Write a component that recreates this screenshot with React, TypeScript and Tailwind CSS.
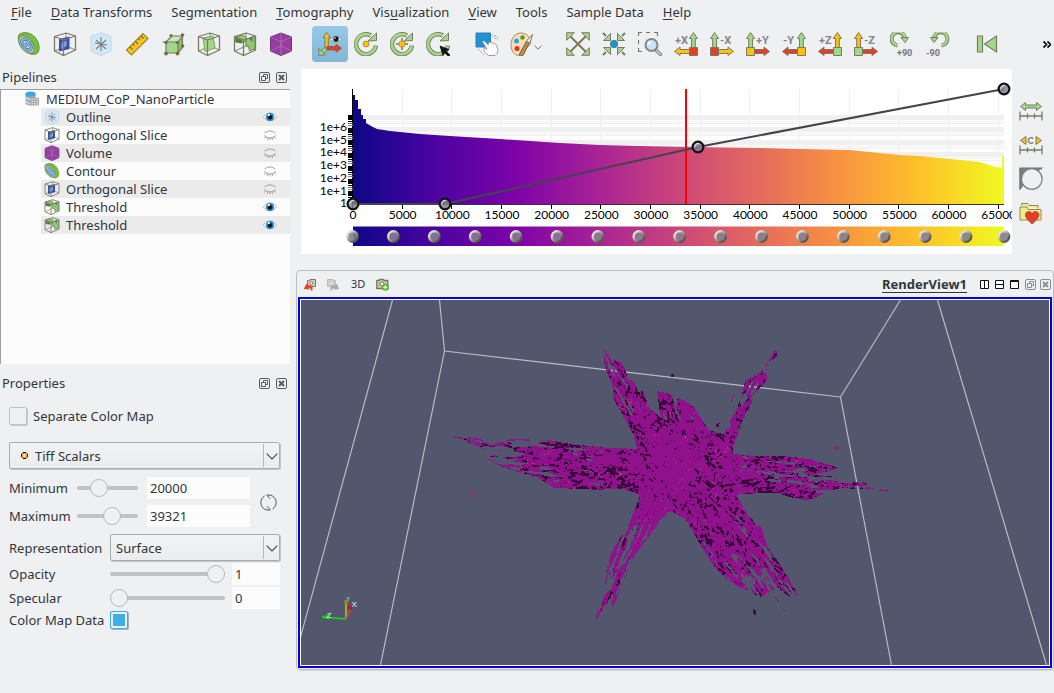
import React from "react";

/* ---------- toolbar drawings ---------- */

const OLIVE = "#7b7a63";
const GREEN = "#a3d88a";
const RED = "#e33e28";
const YELLOW = "#fcc010";

type IconProps = { className?: string };

function Svg({ className = "size-6", children }: { className?: string; children: React.ReactNode }) {
  return (
    <svg viewBox="0 0 24 24" className={`${className} shrink-0`} fill="none" aria-hidden="true">
      {children}
    </svg>
  );
}

function CubeWire({ children }: { children?: React.ReactNode }) {
  return (
    <>
      <path d="M13 1v13M2 19l11-5 9.500 4" stroke="#9a998a" strokeWidth="1.200" />
      {children}
      <path d="M1.500 4.500 13 1l9.500 3v14l-12 5.500-9-4.500zM1.500 4.500l9 3.500 12-4M10.500 8v15.500" stroke={OLIVE} strokeWidth="1.300" strokeLinejoin="round" />
    </>
  );
}

const ContourIcon = ({ className }: IconProps) => (
  <Svg className={className}>
    <path d="M2 2.500C6-.5 14 0 18.500 6c4.500 6 4.500 13 1.500 15.500C15 24 8 20.500 4.500 15.500 1.500 11 .5 5 2 2.500z" fill="#72c03e" stroke="#5d8b35" strokeWidth="1" />
    <g transform="rotate(52 9.500 12.500)">
      <ellipse cx="9.500" cy="12.500" rx="10" ry="6" fill="#bddcc0" stroke="#6e7b58" strokeWidth=".9" />
      <ellipse cx="9.500" cy="12.500" rx="7.600" ry="4.500" fill="#8dbfe4" stroke="#46698e" strokeWidth=".8" />
      <ellipse cx="9.500" cy="12.500" rx="4.800" ry="2.900" fill="#b3daf1" stroke="#46698e" strokeWidth=".8" />
      <ellipse cx="9.500" cy="12.500" rx="2" ry="1.200" fill="#8abbe2" stroke="#46698e" strokeWidth=".7" />
    </g>
  </Svg>
);
const SliceIcon = ({ className }: IconProps) => (
  <Svg className={className}>
    <CubeWire>
      <path d="M6 7 16.500 4.500v12.500L6 19.500z" fill="#3452a8" />
      <path d="M8.500 11 13.500 8.500v5.500l-5 3z" fill="#8e9fd6" />
    </CubeWire>
  </Svg>
);
const OutlineIcon = ({ className }: IconProps) => (
  <Svg className={className}>
    <path d="M2 4.500 12 1l10 3.500V19l-10 4.500L2 19z" fill="#d2e7f7" stroke="#c3d5e2" strokeWidth="1" />
    <path d="M12 5v14M6 11l12 2M7 17l10-9M7 8l10 9" stroke="#777d80" strokeWidth="1.100" />
  </Svg>
);
const RulerIcon = () => (
  <Svg>
    <path d="M1.500 18 18 1.500 23 6.500 6.500 23z" fill="#fbc412" stroke="#9a8641" strokeWidth="1.200" />
    <path d="m5 15 2.500 2.500M8 12l1.500 1.500M10.500 9.500 13 12M13.500 6.500 15 8M16 4l2.500 2.500" stroke="#76632b" strokeWidth="1.200" />
  </Svg>
);
const CropIcon = () => (
  <Svg>
    <path d="m4 10 6-6.500h11.500L17 10z" fill="#c8e9b6" />
    <path d="M5 10h12v11H5z" fill={GREEN} />
    <path d="m17 10 4.500-6v11L17 21z" fill="#84c46b" />
    <path d="M5 10h12v11H5zM5 10l6-6h10.500L17 10M21.500 4v11.500L17 21M1.500 10H5" stroke={OLIVE} strokeWidth="1.200" />
    <g fill="#7a6a4c">
      <circle cx="5" cy="10.500" r="1.700" /><circle cx="16.500" cy="10.500" r="1.700" /><circle cx="5" cy="21.500" r="1.900" /><circle cx="16.500" cy="21.500" r="1.900" />
      <circle cx="10" cy="3.500" r="1.600" /><circle cx="21.500" cy="3" r="1.800" /><circle cx="21.500" cy="14" r="1.800" />
    </g>
  </Svg>
);
const ClipIcon = () => (
  <Svg>
    <CubeWire>
      <path d="m6 6 10-2 2 12-10 3.500z" fill={GREEN} stroke="#7ba565" strokeWidth="1" />
    </CubeWire>
  </Svg>
);
const ThresholdIcon = ({ className }: IconProps) => (
  <Svg className={className}>
    <CubeWire>
      <path d="M2.500 5 10 3l3 2v4l-5 2-5.500-1zM13 7.500 22 4v12.500L16.500 19l-1-5-2.500-1z" fill="#8dc873" stroke="#6e9158" strokeWidth="1" />
      <path d="m3 6 6 2v3l-6-1zM16 6.500l3.500-1.500v5z" fill="#4f8045" />
    </CubeWire>
  </Svg>
);
const VolumeIcon = ({ className }: IconProps) => (
  <Svg className={className}>
    <path d="M1.500 5 12 1l10.500 4v14L12 23.500 1.500 19z" fill="#943f9e" stroke="#783285" strokeWidth="1" strokeLinejoin="round" />
    <path d="M1.500 5 12 9.500 22.500 5M12 9.500v14M12 1v13M1.500 19 12 14l10.500 5" stroke="#b170b9" strokeWidth=".8" />
  </Svg>
);
const AxesIcon = () => (
  <Svg>
    <path d="M9 15.500 3.500 21" stroke={OLIVE} strokeWidth="4" />
    <path d="M9 15.500 4 20.500" stroke={GREEN} strokeWidth="2.500" />
    <path d="M.8 23.300V16.500l6.500 6.500z" fill={GREEN} stroke={OLIVE} strokeWidth="1" />
    <path d="M7 16V5.500H5L8.700.5l3.600 5h-2V16z" fill={YELLOW} stroke={OLIVE} strokeWidth="1" />
    <path d="M9 14.500h9v-2.300l5.500 4-5.500 4V18H9z" fill={RED} stroke="#8f5c4c" strokeWidth="1" />
    <path d="M12.500 7.500Q18 1.500 23.500 7.500 18 12.500 12.500 7.500z" fill="#fff" stroke="#8a969c" strokeWidth="1" />
    <circle cx="18" cy="7" r="2.700" fill="#161616" />
    <circle cx="17" cy="6" r=".8" fill="#fff" />
  </Svg>
);
function RotateArc() {
  return (
    <>
      <path d="M22 13.500A10 10 0 1 1 17 3.500" stroke={OLIVE} strokeWidth="4.400" />
      <path d="M21.800 14A10 10 0 1 1 17 3.500" stroke={GREEN} strokeWidth="2.700" />
      <path d="m14 9 8.500-.5V1z" fill={GREEN} stroke={OLIVE} strokeWidth="1" strokeLinejoin="round" />
    </>
  );
}
const RotateDotIcon = () => (
  <Svg>
    <RotateArc />
    <circle cx="12" cy="12" r="3" fill={YELLOW} stroke="#9a8641" strokeWidth=".8" />
  </Svg>
);
const RotateCrossIcon = () => (
  <Svg>
    <RotateArc />
    <path d="M12 6v12M6 12h12" stroke="#77765f" strokeWidth="1.500" />
    <circle cx="12" cy="12" r="3.200" fill={YELLOW} stroke="#9a8641" strokeWidth=".8" />
  </Svg>
);
const RotatePickIcon = () => (
  <Svg>
    <RotateArc />
    <path d="m14 14 9 3.500-3 1.500 4 4-1.500 1.500-4-4-1.500 3z" fill="#151515" stroke="#151515" strokeWidth=".8" />
  </Svg>
);
const HandIcon = () => (
  <Svg>
    <path d="M1 1h14.500v14H1z" fill="#1f93d6" stroke="#2b7fb4" />
    <path d="M17 3l5 5M3 17l6 6M20 3l3 4" stroke="#8e9397" strokeDasharray="2 1.500" />
    <path d="M7.500 9.500c.8-.9 2-.5 2.700.3l3 3.200.3-2.200c1-1 2-.6 2.500.2.900-.6 2-.3 2.500.6 1-.4 2 0 2.500 1.200 1.200 2.500 2.500 4.500 1.500 8L20 23.500h-6.500C11 22 9.500 19 8.500 17.500c.5-1.500 2-1 3.500-.2z" fill="#fff" stroke="#9b9b9b" strokeWidth="1" />
  </Svg>
);
const PaletteIcon = () => (
  <Svg>
    <path d="M11 1C5 1 1 6.500 1 12.500 1 19 4.500 23.500 9 23.500c3.500 0 3-3.500 4.500-6 2-2.500 6-2 7-6C21.500 6 17 1 11 1z" fill="#f9dfb0" stroke="#a58c62" strokeWidth="1" />
    <circle cx="6.500" cy="9" r="2.500" fill="#2ea2de" />
    <circle cx="12.500" cy="5.500" r="2.200" fill="#5f9438" />
    <circle cx="7" cy="16.500" r="2.500" fill="#e33025" />
    <path d="m9.500 22 7-12.500 2.500 2L13 23.500c-1.500 1-3.500.5-3.500-1.500z" fill="#b99252" stroke="#6c5b3b" />
    <path d="M16 9.500 22.500 2.500 20 11z" fill="#f2f2f2" stroke="#77765f" />
  </Svg>
);
const ExpandIcon = () => (
  <Svg>
    <path d="m4 4 16 16M20 4 4 20" stroke={OLIVE} strokeWidth="2" />
    <path d="M.7.700h7.600L.7 8.300zM23.300.700v7.600L15.700.700zM.7 23.300v-7.600l7.600 7.600zM23.300 23.300h-7.600l7.600-7.600z" fill={GREEN} stroke={OLIVE} strokeWidth="1" strokeLinejoin="round" />
  </Svg>
);
const CenterIcon = () => (
  <Svg>
    <path d="M1 1l3 3M23 1l-3 3M1 23l3-3M23 23l-3-3" stroke={OLIVE} strokeWidth="2" />
    <path d="M8.500 1.500v7h-7zM15.500 1.500v7h7zM8.500 22.500v-7h-7zM15.500 22.500v-7h7z" fill={GREEN} stroke={OLIVE} strokeWidth="1" strokeLinejoin="round" />
    <circle cx="12" cy="12" r="3.700" fill="#1f93d6" stroke="#4f8199" />
  </Svg>
);
const ZoomBoxIcon = () => (
  <Svg>
    <path d="M.5 4V.5H4M8 .5h4M16 .5h3.500V4M.5 8v4M.5 16v3.500H4" stroke="#77775f" strokeWidth="1.200" />
    <path d="m18 18 5 5" stroke="#8a8a8a" strokeWidth="3.500" strokeLinecap="round" />
    <path d="m18.500 18.500 4 4" stroke="#c9ccd0" strokeWidth="1.500" strokeLinecap="round" />
    <circle cx="13.500" cy="13" r="6" fill="#c4e5f8" stroke="#858789" strokeWidth="2" />
    <circle cx="11.500" cy="11" r="2" fill="#edf8fe" />
  </Svg>
);

function ViewAxisIcon({ up, box, side, label, flip = false }: { up: string; box: string; side: string; label: string; flip?: boolean }) {
  return (
    <Svg>
      <g transform={flip ? "translate(24 0) scale(-1 1)" : undefined} stroke={OLIVE} strokeWidth="1">
        <path d="M17.500 16V6.500h-2.200L19.500.5l4 6h-2.200V16z" fill={up} />
        <path d="M15.500 17.500H6V15L.5 19.500 6 23.500V21.500h9.500z" fill={side} />
        <path d="M15.500 15.500h8v8h-8z" fill={box} />
      </g>
      <text x={flip ? 10 : 1} y="12" fontSize="11" fontWeight="700" fill="#85858a" fontFamily="Roboto, sans-serif">
        {label}
      </text>
    </Svg>
  );
}
function Turn90Icon({ label, flip = false }: { label: string; flip?: boolean }) {
  return (
    <Svg>
      <g transform={flip ? "translate(24 0) scale(-1 1)" : "translate(-1 0)"}>
        <path d="M8.500 13.500A6.700 6.700 0 1 1 16 7" stroke={OLIVE} strokeWidth="4" />
        <path d="M9 13.200A6.700 6.700 0 1 1 16 7" stroke={GREEN} strokeWidth="2.400" />
        <path d="M12 5.500h7.500l-3.500 5z" fill={GREEN} stroke={OLIVE} strokeWidth="1" />
      </g>
      <text x={flip ? 0 : 7} y="23.500" fontSize="9" fontWeight="700" fill="#75757a" fontFamily="Roboto, sans-serif">
        {label}
      </text>
    </Svg>
  );
}
const FirstFrameIcon = () => (
  <Svg>
    <path d="M2.500 4h5v16h-5zM21.500 4v16L9.500 12z" fill={GREEN} stroke={OLIVE} strokeWidth="1.200" />
  </Svg>
);

/* ---------- histogram side drawings ---------- */

const Scale = () => <path d="M1 12.500v9M23 12.500v9M1 17h22M8.500 14.500v5M15.500 14.500v5" stroke={OLIVE} strokeWidth="1.300" />;
const ResetRangeIcon = () => (
  <Svg>
    <Scale />
    <path d="m1.500 7.500 5-4V6h11V3.500l5 4-5 4V9h-11v2.500z" fill={GREEN} stroke={OLIVE} />
  </Svg>
);
const CustomRangeIcon = () => (
  <Svg>
    <Scale />
    <path d="M1.500 7.500 7 3.500v8zM22.500 7.500 17 3.500v8z" fill={YELLOW} stroke={OLIVE} />
    <path d="M14.200 5.600a2.800 2.800 0 1 0 0 3.800" stroke="#85858a" strokeWidth="1.600" />
  </Svg>
);
const InvertIcon = () => (
  <Svg>
    <path d="M.8 1h22.500L19 3.500 4 18.500.8 22.500z" fill="#7d7f81" stroke="#6e7072" />
    <circle cx="12.800" cy="12" r="10.300" fill="#eff0f1" stroke="#7d7f81" strokeWidth="1.200" />
  </Svg>
);
const PresetIcon = () => (
  <Svg>
    <path d="M2.500 4.500v-2h6l1.500 2h9v3" fill="#f3ea8c" stroke="#8f8a55" />
    <path d="M1 6h7l1.500 2.500H22V19H1z" fill="#f3ea8c" stroke="#8f8a55" strokeLinejoin="round" />
    <path d="M13 23C9 19.500 6.500 17 6.500 13.800c0-3.600 4.800-4.300 6.500-1.300 1.700-3 7-2.300 7 1.300 0 3.200-3 5.700-7 9.200z" fill={RED} stroke="#9c4a35" strokeWidth=".8" />
  </Svg>
);

/* ---------- small drawings ---------- */

const Eye = ({ open }: { open: boolean }) => (
  <svg viewBox="0 0 14 14" className="size-3.5" fill="none" aria-hidden="true">
    {open ? (
      <>
        <path d="M.3 7Q7-1.500 13.700 7 7 15 .3 7z" fill="#fff" stroke="#8f8f8f" strokeWidth=".7" />
        <circle cx="7" cy="7" r="4" fill="#188ad0" />
        <circle cx="7" cy="7.200" r="2.200" fill="#0b0b0b" />
        <circle cx="5.800" cy="5" r="1.200" fill="#e7f6ff" />
      </>
    ) : (
      <path d="M1.500 5Q7 .8 12.500 5M1.200 7.500Q7 12.500 12.800 7.500M2.500 9l-1 1.500M5 10l-.7 2M7 10.300v2M9 10l.7 2M11.500 9l1 1.500" stroke="#979797" strokeWidth=".9" />
    )}
  </svg>
);
const DatasetIcon = () => (
  <svg viewBox="0 0 16 16" className="size-4" fill="none" aria-hidden="true">
    <path d="M1.500 4v9q5 3 10 0V4z" fill="#a5adb1" />
    <ellipse cx="6.500" cy="3.200" rx="5.300" ry="2.600" fill="#39a9dc" />
    <path d="M1.500 7q5 3 10 0M1.500 10.500q5 3 6 1.500" stroke="#e9edef" />
    <path d="M7 7h7.500v7H7zM7 9.300h7.500M7 11.700h7.500M9.500 7v7M12 7v7" fill="#e4e2dc" stroke="#9c9a90" strokeWidth=".8" />
  </svg>
);
const FloatIcon = ({ faint = false }: { faint?: boolean }) => (
  <svg viewBox="0 0 11 11" className="size-[11px]" fill="none" stroke={faint ? "#8e8e8e" : "#5b5b5b"} aria-hidden="true">
    <rect x=".5" y=".5" width="10" height="10" rx="1.500" />
    <path d="M2.500 4.500h4v4h-4zM4.500 4.500v-2h4v4h-2" />
  </svg>
);
const CloseIcon = ({ faint = false }: { faint?: boolean }) => (
  <svg viewBox="0 0 11 11" className="size-[11px]" fill="none" stroke={faint ? "#8e8e8e" : "#5b5b5b"} aria-hidden="true">
    <rect x=".5" y=".5" width="10" height="10" rx="1.500" />
    <path d="m3 3 5 5M8 3 3 8" strokeWidth="2" />
  </svg>
);
const Chevron = ({ className = "" }: IconProps) => (
  <svg viewBox="0 0 12 7" className={className} fill="none" stroke="#3f4549" strokeWidth="1.100" aria-hidden="true">
    <path d="m.7.700 5.300 5.300 5.300-5.300" />
  </svg>
);
const CameraIcon = ({ tone, badge, flip = false }: { tone: string; badge: string; flip?: boolean }) => (
  <svg viewBox="0 0 13 13" className="size-[13px]" fill="none" aria-hidden="true">
    <g transform={flip ? "translate(13 0) scale(-1 1)" : undefined}>
      <path d="M4.500 2.500h2l.5-1h5.500v7h-8z" fill="#d3d0c2" stroke={tone} />
      <circle cx="8.500" cy="5" r="1.600" fill="#fff" stroke={tone} />
      <path d="M9.500 12.500V9Q8 6.500 4.500 7L3.500 5.500.7 11l6 .5L5.500 9.500Q7.500 9 8 12.500z" fill={badge} />
    </g>
  </svg>
);
const CaptureIcon = () => (
  <svg viewBox="0 0 13 13" className="size-[13px]" fill="none" aria-hidden="true">
    <path d="M.8 2.500h2l1-1h3.500l1 1h3.500v8h-11z" fill="#c9c6b8" stroke="#77765f" strokeWidth="1.300" />
    <circle cx="6" cy="6" r="2" fill="#fff" stroke="#77765f" />
    <circle cx="9.300" cy="9.300" r="3.500" fill="#5cb82c" />
    <path d="M9.300 7.300v4M7.300 9.300h4" stroke="#e6ffdb" strokeWidth="1.200" />
  </svg>
);
const LayoutIcon = ({ d }: { d: string }) => (
  <svg viewBox="0 0 9 9" className="size-[9px]" fill="#fff" stroke="#111" aria-hidden="true">
    <path d="M.5.5h8v8h-8z" />
    <path d={d} />
  </svg>
);

/* ---------- menu ---------- */

const MENUS: [string, string, string][] = [
  ["", "F", "ile"],
  ["", "D", "ata Transforms"],
  ["Se", "", "gmentation"],
  ["", "T", "omography"],
  ["Vis", "u", "alization"],
  ["", "V", "iew"],
  ["Tools", "", ""],
  ["Sample Data", "", ""],
  ["", "H", "elp"],
];

function ToolButton({ label, active = false, children }: { label: string; active?: boolean; children: React.ReactNode }) {
  return (
    <button
      type="button"
      aria-label={label}
      className={`flex size-9 shrink-0 items-center justify-center rounded-sm ${active ? "bg-linear-to-b from-[#93cae8] to-[#84b5d5]" : ""}`}
    >
      {children}
    </button>
  );
}

function Toolbar() {
  return (
    <div className="flex h-10 items-center overflow-hidden pl-[11px]">
      <div className="flex shrink-0 gap-[13px]">
        <div className="flex">
          <ToolButton label="Contour"><ContourIcon /></ToolButton>
          <ToolButton label="Orthogonal slice"><SliceIcon /></ToolButton>
          <ToolButton label="Outline"><OutlineIcon /></ToolButton>
          <ToolButton label="Ruler"><RulerIcon /></ToolButton>
          <ToolButton label="Crop"><CropIcon /></ToolButton>
          <ToolButton label="Clip"><ClipIcon /></ToolButton>
          <ToolButton label="Threshold"><ThresholdIcon /></ToolButton>
          <ToolButton label="Volume"><VolumeIcon /></ToolButton>
        </div>
        <div className="flex">
          <ToolButton label="Show orientation axes" active><AxesIcon /></ToolButton>
          <ToolButton label="Show center"><RotateDotIcon /></ToolButton>
          <ToolButton label="Reset center"><RotateCrossIcon /></ToolButton>
          <ToolButton label="Pick center"><RotatePickIcon /></ToolButton>
        </div>
        <div className="flex">
          <ToolButton label="Interact"><HandIcon /></ToolButton>
          <button type="button" aria-label="Color palette" className="flex h-9 w-[42px] items-center justify-center">
            <PaletteIcon />
            <Chevron className="mt-1.5 h-[5px] w-2" />
          </button>
        </div>
        <div className="flex">
          <ToolButton label="Reset camera"><ExpandIcon /></ToolButton>
          <ToolButton label="Zoom to data"><CenterIcon /></ToolButton>
          <ToolButton label="Zoom to box"><ZoomBoxIcon /></ToolButton>
          <ToolButton label="View +X"><ViewAxisIcon up={GREEN} box={RED} side={YELLOW} label="+X" /></ToolButton>
          <ToolButton label="View -X"><ViewAxisIcon up={GREEN} box={RED} side={YELLOW} label="-X" flip /></ToolButton>
          <ToolButton label="View +Y"><ViewAxisIcon up={GREEN} box={YELLOW} side={RED} label="+Y" flip /></ToolButton>
          <ToolButton label="View -Y"><ViewAxisIcon up={GREEN} box={YELLOW} side={RED} label="-Y" /></ToolButton>
          <ToolButton label="View +Z"><ViewAxisIcon up={YELLOW} box={GREEN} side={RED} label="+Z" /></ToolButton>
          <ToolButton label="View -Z"><ViewAxisIcon up={YELLOW} box={GREEN} side={RED} label="-Z" flip /></ToolButton>
          <ToolButton label="Rotate +90"><Turn90Icon label="+90" /></ToolButton>
          <ToolButton label="Rotate -90"><Turn90Icon label="-90" flip /></ToolButton>
        </div>
        <ToolButton label="First frame"><FirstFrameIcon /></ToolButton>
      </div>
      <button type="button" aria-label="More tools" className="ml-auto pr-[3px]">
        <svg viewBox="0 0 8 7" className="h-[7px] w-2" fill="none" stroke="#000" strokeWidth="1.700" aria-hidden="true">
          <path d="m.5.5 3 3-3 3M4.500.5l3 3-3 3" />
        </svg>
      </button>
    </div>
  );
}

/* ---------- left column ---------- */

const PIPELINE: { name: string; Icon: React.ComponentType<IconProps>; open: boolean }[] = [
  { name: "Outline", Icon: OutlineIcon, open: true },
  { name: "Orthogonal Slice", Icon: SliceIcon, open: false },
  { name: "Volume", Icon: VolumeIcon, open: false },
  { name: "Contour", Icon: ContourIcon, open: false },
  { name: "Orthogonal Slice", Icon: SliceIcon, open: false },
  { name: "Threshold", Icon: ThresholdIcon, open: true },
  { name: "Threshold", Icon: ThresholdIcon, open: true },
];

function PanelTitle({ title }: { title: string }) {
  return (
    <div className="mb-px flex h-[22px] items-center pr-[3px] pl-0.5">
      <h2 className="flex-1">{title}</h2>
      <div className="flex gap-1.5">
        <button type="button" aria-label={`Float ${title}`}><FloatIcon /></button>
        <button type="button" aria-label={`Close ${title}`}><CloseIcon /></button>
      </div>
    </div>
  );
}

function PipelineTree() {
  return (
    <div className="h-[275px] border-t border-l border-[#9b9ea1] bg-[#fcfcfc]">
      <div className="flex h-[18px] items-center gap-1.5 pl-[23px]">
        <DatasetIcon />
        <span>MEDIUM_CoP_NanoParticle</span>
      </div>
      <ul className="pl-10">
        {PIPELINE.map(({ name, Icon, open }, i) => (
          <li key={i} className="flex h-[18px] items-center pr-[13px] pl-[3px] odd:bg-[#ebebeb]">
            <Icon className="size-4" />
            <span className="flex-1 pl-1.5">{name}</span>
            <button type="button" aria-label={`${open ? "Hide" : "Show"} ${name}`}>
              <Eye open={open} />
            </button>
          </li>
        ))}
      </ul>
    </div>
  );
}

const RANGE =
  "h-[18px] appearance-none bg-transparent [&::-webkit-slider-runnable-track]:h-1 [&::-webkit-slider-runnable-track]:rounded-full [&::-webkit-slider-runnable-track]:bg-[#bdc3c7] [&::-webkit-slider-thumb]:-mt-[7px] [&::-webkit-slider-thumb]:size-[18px] [&::-webkit-slider-thumb]:appearance-none [&::-webkit-slider-thumb]:rounded-full [&::-webkit-slider-thumb]:border [&::-webkit-slider-thumb]:border-[#b5babd] [&::-webkit-slider-thumb]:bg-[#eff0f1]";
const FIELD = "h-[22px] bg-[#fcfcfc] pl-[3px]";
const CHECK =
  "size-[18px] shrink-0 appearance-none rounded-xs border border-[#bdc3c7] bg-[#eff0f1] shadow-[1px_1px_0_#c4c9cc] checked:border-[#3daee9] checked:bg-[#3daee9] checked:shadow-[inset_0_0_0_2px_#eff0f1,1px_1px_0_#9fb4c0]";

function Combo({ id, label, options, icon = false }: { id: string; label: string; options: string[]; icon?: boolean }) {
  return (
    <div className="relative flex-1">
      <select
        id={id}
        aria-label={label}
        className={`h-[27px] w-full appearance-none rounded-xs border border-[#a9adb0] bg-linear-to-b from-[#f1f2f3] to-[#ebeced] pr-5 shadow-[1px_1px_0_#c0c4c7] ${icon ? "pl-[25px]" : "pl-[5px]"}`}
      >
        {options.map((o) => (
          <option key={o}>{o}</option>
        ))}
      </select>
      {icon && (
        <svg viewBox="0 0 7 7" className="pointer-events-none absolute top-2.5 left-3 size-[7px]" aria-hidden="true">
          <path d="M2 .5h3L6.500 2v3L5 6.500H2L.5 5V2z" fill="#f9a43b" stroke="#5a3a10" strokeWidth=".8" />
          <path d="M2 .5h3M.5 2.500v2M6.500 2.500v2M2 6.500h3" stroke="#000" strokeWidth="1" />
          <circle cx="3.500" cy="3.500" r="1.200" fill="#fff2dc" />
        </svg>
      )}
      <span className="pointer-events-none absolute inset-y-0.5 right-4 w-px bg-[#b4b8ba]" />
      <Chevron className="pointer-events-none absolute top-[11px] right-0.5 h-[7px] w-3" />
    </div>
  );
}

function Properties() {
  return (
    <form className="flex flex-col pr-[10px] pl-[9px]">
      <label className="mt-3 flex items-center gap-1.5">
        <input type="checkbox" className={CHECK} />
        Separate Color Map
      </label>
      <div className="mt-[17px] flex">
        <Combo id="scalars" label="Scalars" options={["Tiff Scalars"]} icon />
      </div>
      <div className="mt-2 flex items-center">
        <div className="grid flex-1 grid-cols-[auto_61px_103px] items-center justify-start gap-y-1.5">
          <label htmlFor="min" className="w-[68px]">Minimum</label>
          <input type="range" aria-label="Minimum slider" defaultValue={30} className={`${RANGE} w-[61px]`} />
          <input id="min" type="text" defaultValue="20000" className={`${FIELD} ml-[9px] w-[103px]`} />
          <label htmlFor="max" className="w-[68px]">Maximum</label>
          <input type="range" aria-label="Maximum slider" defaultValue={60} className={`${RANGE} w-[61px]`} />
          <input id="max" type="text" defaultValue="39321" className={`${FIELD} ml-[9px] w-[103px]`} />
        </div>
        <button type="button" aria-label="Reset range" className="mr-[3px]">
          <svg viewBox="0 0 17 17" className="size-[17px]" fill="none" stroke="#4d5357" aria-hidden="true">
            <path d="M4.500 2A7.600 7.600 0 0 0 4.500 15M12.500 15A7.600 7.600 0 0 0 12.500 2M7 1Q10 .5 12.500 2M10 16Q7 16.500 4.500 15M6.500 .8l3.500 4M10.500 16.200l-3.500-4" />
          </svg>
        </button>
      </div>
      <div className="mt-[7px] flex items-center">
        <label htmlFor="rep" className="w-[101px]">Representation</label>
        <Combo id="rep" label="Representation" options={["Surface"]} />
      </div>
      <div className="mt-0.5 flex items-center">
        <label htmlFor="opacity" className="w-[101px]">Opacity</label>
        <input type="range" aria-label="Opacity slider" defaultValue={100} className={`${RANGE} min-w-0 flex-1`} />
        <input id="opacity" type="text" defaultValue="1" className={`${FIELD} ml-[7px] w-12`} />
      </div>
      <div className="mt-0.5 flex items-center">
        <label htmlFor="specular" className="w-[101px]">Specular</label>
        <input type="range" aria-label="Specular slider" defaultValue={0} className={`${RANGE} min-w-0 flex-1`} />
        <input id="specular" type="text" defaultValue="0" className={`${FIELD} ml-[7px] w-12`} />
      </div>
      <div className="mt-0.5 flex items-center">
        <label htmlFor="mapdata" className="w-[101px]">Color Map Data</label>
        <input id="mapdata" type="checkbox" defaultChecked className={CHECK} />
      </div>
    </form>
  );
}

/* ---------- histogram ---------- */

const PLASMA = ["#0d0887", "#4b03a1", "#7d03a8", "#a82296", "#cb4679", "#e56b5d", "#f89441", "#fdc328", "#f0f921"];
const X0 = 52;
const X1 = 703;
const BASE = 135;
const CURVE: [number, number][] = [
  [52, 26], [54, 26], [54, 31], [57, 31], [57, 40], [60, 40], [60, 46], [62, 46], [62, 50], [65, 50], [65, 54], [70, 57], [76, 60],
  [89, 62], [119, 65], [149, 67], [199, 70], [259, 74], [299, 76], [339, 77], [389, 78], [459, 79], [499, 80], [549, 81],
  [579, 84], [599, 86], [619, 87], [649, 90], [679, 93], [695, 98], [701, 99], [701, 87], [703, 87],
];
const X_TICKS = Array.from({ length: 14 }, (_, i) => i * 5000);
const Y_LABELS = ["1e+6", "1e+5", "1e+4", "1e+3", "1e+2", "1e+1", "1"];
const xOf = (v: number) => X0 + (v / 65535) * (X1 - X0);

function Histogram() {
  const curve = `M${X0} ${BASE}` + CURVE.map(([x, y]) => `L${x} ${y}`).join("") + `L${X1} ${BASE}z`;
  return (
    <svg viewBox="0 0 711 185" preserveAspectRatio="xMinYMin meet" className="h-[185px] min-w-0 flex-1 bg-white" role="img" aria-label="Histogram">
      <defs>
        <linearGradient id="plasma" gradientUnits="userSpaceOnUse" x1={X0} x2={X1} y1="0" y2="0">
          {PLASMA.map((c, i) => (
            <stop key={c} offset={i / 8} stopColor={c} />
          ))}
        </linearGradient>
        <linearGradient id="knob" x1="0" y1="0" x2="1" y2="1">
          <stop offset=".2" stopColor="#e0e0d0" />
          <stop offset=".8" stopColor="#5a5a4c" />
        </linearGradient>
      </defs>
      <g shapeRendering="crispEdges">
        {[46, 58, 71, 83].map((y) => (
          <g key={y} fill="#f0f0f0">
            <rect x={X0} y={y} width={X1 - X0} height="5" />
            <rect x={X0} y={y + 6} width={X1 - X0} height="1" />
            <rect x={X0} y={y + 8} width={X1 - X0} height="1" />
          </g>
        ))}
        {X_TICKS.slice(1).map((v) => (
          <rect key={v} x={Math.round(xOf(v)) - 1} y="20" width="1" height="115" fill="#f0f0f0" />
        ))}
      </g>
      <path d={curve} fill="url(#plasma)" />
      <g shapeRendering="crispEdges" fill="#000">
        <rect x="51" y="20" width="1" height="116" />
        <rect x={X0} y="135" width={X1 - X0} height="1" fill="#33333a" />
        {[46, 59, 71, 84, 97, 110, 122].map((y) => (
          <g key={y}>
            <rect x="47" y={y} width="5" height="5" />
            <rect x="47" y={y + 6} width="5" height="1" />
            <rect x="47" y={y + 8} width="5" height="1" fill="#666" />
            <rect x="47" y={y + 10} width="5" height="1" fill="#888" />
          </g>
        ))}
        {X_TICKS.map((v) => (
          <rect key={v} x={Math.round(xOf(v)) - 1} y="135" width="1" height="5" />
        ))}
        <rect x="384" y="20" width="2" height="115" fill="#f00" />
      </g>
      <g fontFamily="Lato, sans-serif" fontSize="12" fill="#000">
        {Y_LABELS.map((t, i) => (
          <text key={t} x="46" y={62 + Math.round(i * 12.700)} textAnchor="end">{t}</text>
        ))}
        {X_TICKS.map((v) => (
          <text key={v} x={xOf(v)} y="150" textAnchor="middle">{v}</text>
        ))}
      </g>
      <path d="M52 135h92L397 78 703 20" fill="none" stroke="#44444c" strokeWidth="2" />
      {[[52, 135], [144, 135], [397, 78], [703, 20]].map(([x, y]) => (
        <g key={x}>
          <circle cx={x} cy={y} r="5.400" fill="#7c8088" fillOpacity=".85" stroke="#111" strokeWidth="2.200" />
          <path d={`M${x - 3.500} ${y + .5}a4 4 0 0 1 4.500-4`} fill="none" stroke="#d6d8dc" strokeWidth="1.200" />
        </g>
      ))}
      <rect x={X0} y="157" width={X1 - X0} height="20" fill="url(#plasma)" />
      <rect x={X0} y="157" width={X1 - X0} height="1" fill="#fff" fillOpacity=".5" />
      {Array.from({ length: 17 }, (_, i) => (
        <circle key={i} cx={Math.min(X1, 51.500 + i * 40.900)} cy="167.500" r="5.200" fill="#857e92" fillOpacity=".9" stroke="url(#knob)" strokeWidth="2.400" />
      ))}
    </svg>
  );
}

/* ---------- particle rendering ---------- */

type Pt = [number, number];
type Arm = { deg: number; outline: Pt[]; solid: number; dark: number };

const ARMS: Arm[] = [
  { deg: 50, solid: 1, dark: 0.26, outline: [[650, 330], [700, 290], [780, 280], [830, 320], [890, 370], [890, 460], [860, 520], [760, 530], [715, 515], [650, 480], [635, 380]] },
  { deg: 5, solid: 0.86, dark: 0.38, outline: [[65, 318], [140, 322], [185, 343], [240, 326], [350, 328], [430, 342], [530, 352], [620, 355], [700, 340], [700, 500], [640, 500], [580, 474], [500, 478], [370, 472], [320, 440], [250, 420], [200, 403], [168, 384], [200, 368], [150, 350]] },
  { deg: 61, solid: 0.76, dark: 0.36, outline: [[518, 55], [545, 85], [578, 98], [592, 145], [625, 158], [650, 195], [648, 225], [700, 270], [680, 350], [620, 355], [608, 310], [580, 260], [550, 205], [545, 160], [523, 110]] },
  { deg: 63, solid: 0.76, dark: 0.34, outline: [[680, 182], [722, 190], [737, 235], [742, 200], [790, 228], [832, 295], [860, 308], [905, 312], [910, 420], [880, 420], [700, 370], [620, 355], [610, 300], [640, 230], [690, 262]] },
  { deg: -62, solid: 0.74, dark: 0.3, outline: [[1045, 56], [1036, 88], [1005, 122], [1012, 150], [985, 205], [940, 272], [905, 355], [870, 345], [888, 290], [912, 250], [932, 200], [945, 150], [990, 125], [1018, 85]] },
  { deg: 4, solid: 0.84, dark: 0.42, outline: [[860, 365], [960, 375], [1070, 377], [1145, 387], [1228, 414], [1150, 432], [1298, 448], [1375, 482], [1230, 472], [1160, 497], [1140, 510], [1080, 500], [1040, 487], [940, 490], [870, 500]] },
  { deg: 53, solid: 0.82, dark: 0.34, outline: [[715, 540], [700, 500], [760, 460], [910, 480], [950, 550], [992, 590], [1012, 650], [1062, 720], [1105, 797], [1078, 800], [1040, 770], [992, 800], [900, 757], [850, 708], [808, 640], [765, 565]] },
  { deg: 115, solid: 0.76, dark: 0.14, outline: [[635, 480], [740, 500], [720, 540], [690, 570], [660, 612], [612, 675], [580, 745], [548, 832], [538, 800], [508, 870], [500, 868], [522, 790], [528, 700], [552, 650], [600, 570]] },
];

function hash(x: number, y: number, s: number) {
  let h = Math.imul(x, 374761393) ^ Math.imul(y, 668265263) ^ Math.imul(s, 1442695041);
  h = Math.imul(h ^ (h >>> 13), 1274126177);
  return ((h ^ (h >>> 16)) >>> 0) / 4294967296;
}
function noise(x: number, y: number, s: number) {
  const xi = Math.floor(x);
  const yi = Math.floor(y);
  const fx = x - xi;
  const fy = y - yi;
  const a = hash(xi, yi, s) * (1 - fx) + hash(xi + 1, yi, s) * fx;
  const b = hash(xi, yi + 1, s) * (1 - fx) + hash(xi + 1, yi + 1, s) * fx;
  return a * (1 - fy) + b * fy;
}
function inside(x: number, y: number, poly: Pt[]) {
  let hit = false;
  for (let i = 0, j = poly.length - 1; i < poly.length; j = i++) {
    const [xi, yi] = poly[i];
    const [xj, yj] = poly[j];
    if (yi > y !== yj > y && x < ((xj - xi) * (y - yi)) / (yj - yi) + xi) hit = !hit;
  }
  return hit;
}

const PARTICLE_COLORS = ["#8f118b", "#3b083d", "#a51f84", "#b93a72"];

function buildParticle(): string[] {
  const paths = ["", "", "", ""];
  for (let y = 15; y < 292; y++) {
    let run = -1;
    let start = 0;
    for (let x = 18; x <= 462; x++) {
      let tone = -1;
      for (let k = 0; k < ARMS.length && tone < 0; k++) {
        const arm = ARMS[k];
        if (!inside(x * 3, y * 3, arm.outline)) continue;
        const a = (arm.deg * Math.PI) / 180;
        const u = x * Math.cos(a) + y * Math.sin(a);
        const v = -x * Math.sin(a) + y * Math.cos(a);
        const far = Math.min(1, Math.hypot(x - 250, y - 140) / 175);
        const streak = noise(u / 14, v / 2.100, k + 1) * 0.7 + noise(u / 4, v / 1.600, k + 20) * 0.3;
        if (k > 0 && streak > arm.solid + 0.14 - far * 0.5) continue;
        const d = noise(u / 2.200, v / 1.500, k + 40) * 0.5 + noise(u / 6, v / 2.500, k + 50) * 0.25 + noise(u / 16, v / 8, k + 60) * 0.25;
        const p = noise(x / 1.500, y / 1.300, 90) * 0.65 + noise(x / 12, y / 12, 91) * 0.35;
        const near = Math.max(0, 1 - Math.hypot(x - 245, y - 128) / 55);
        tone = d < 0.26 + (arm.dark - near * 0.2) * 0.4 ? 1 : p > 0.84 ? 3 : p > 0.76 ? 2 : 0;
      }
      if (tone !== run) {
        if (run >= 0) paths[run] += `M${start} ${y}h${x - start}v1h${start - x}z`;
        run = tone;
        start = x;
      }
    }
  }
  return paths;
}
const PARTICLE = buildParticle();

function RenderScene() {
  return (
    <svg viewBox="0 0 749 365" preserveAspectRatio="xMidYMid slice" className="block size-full bg-[#52576e]" role="img" aria-label="3D view">
      <path d="M92 0 0 337M139 0l5 51L80 365M144 51l396 46M600 0l-60 97 51 268M637 0l109 365" fill="none" stroke="#b9bbc2" strokeWidth="1.200" />
      <g transform="translate(129 30)" shapeRendering="crispEdges">
        {PARTICLE.map((d, i) => (
          <path key={i} d={d} fill={PARTICLE_COLORS[i]} />
        ))}
        <path d="M241 44h3v3h-3zM323 279l3 1 1 6-3-2zM287 94l4-2-2 5h-3z" fill="#4a0a4a" />
        <path d="M39 160h5M41 165h7M38 167h4M49 169h2" stroke="#a32a78" />
        <path d="M405 117h4v1h-4zM345 267l4 5M354 279l2 3M170 165h2M246 51h2M302 72l2-7" stroke="#8f118b" fill="#8f118b" />
        <path d="m346 20-6 12M338 34l-2 3M175 20l7 15M24 107l14 2 14 5M167 289l2-9M436 158l8 1M450 160l8 1" stroke="#8f118b" strokeWidth="1.500" />
      </g>
      <g fill="none" strokeWidth="1.400">
        <path d="M45.500 319 22 317" stroke="#0fdc18" />
        <path d="m22 317 6-1.500v3z" fill="#0fdc18" stroke="#0fdc18" />
        <path d="M45.500 319V302" stroke="#cfc715" />
        <path d="m45.500 319 5-11" stroke="#e0431e" />
        <circle cx="45.500" cy="302" r="1.500" fill="#8f8a10" stroke="#8f8a10" />
        <circle cx="50" cy="307.500" r="1.500" fill="#d0101c" stroke="#d0101c" />
      </g>
      <g fill="#f0f0f0" fontSize="8" fontFamily="Liberation Sans, sans-serif">
        <text x="26" y="318">Z</text>
        <text x="51" y="307">X</text>
        <text x="46" y="301" fontSize="5">Y</text>
      </g>
    </svg>
  );
}

function RenderPanel() {
  return (
    <section className="flex min-h-0 flex-1 flex-col rounded-sm border border-[#bcbfc2] shadow-[1px_1px_0_#d5d7d9]">
      <header className="flex h-[26px] items-center pr-0.5 pl-1.5">
        <div className="flex flex-1 items-center gap-[11px]">
          <button type="button" aria-label="Undo camera"><CameraIcon tone="#77765f" badge="#e5432c" /></button>
          <button type="button" aria-label="Redo camera"><CameraIcon tone="#b9b9b5" badge="#a9a9a9" flip /></button>
          <button type="button" className="text-[11px]">3D</button>
          <button type="button" aria-label="Capture"><CaptureIcon /></button>
        </div>
        <h2 className="border-b border-[#31363b] text-[13px] leading-4 font-bold">RenderView1</h2>
        <div className="ml-[13px] flex items-center gap-1.5">
          <button type="button" aria-label="Split horizontally"><LayoutIcon d="M4.500.5v8" /></button>
          <button type="button" aria-label="Split vertically"><LayoutIcon d="M.5 4.500h8" /></button>
          <button type="button" aria-label="Maximize"><LayoutIcon d="M.5 1.500h8" /></button>
          <button type="button" aria-label="Float view"><FloatIcon faint /></button>
          <button type="button" aria-label="Close view" className="-ml-0.5"><CloseIcon faint /></button>
        </div>
      </header>
      <div className="mx-px mb-px min-h-0 flex-1 border-2 border-[#0000f0] bg-white p-px">
        <RenderScene />
      </div>
    </section>
  );
}

export default function App() {
  return (
    <div className="flex h-screen flex-col overflow-hidden bg-[#eff0f1] font-['Noto_Sans',sans-serif] text-[13px] leading-[18px] text-[#31363b]">
      <nav className="flex h-6 shrink-0 items-center gap-px pl-0.5">
        {MENUS.map(([pre, key, post]) => (
          <button key={pre + key + post} type="button" className="px-[9px] whitespace-nowrap">
            {pre}
            {key && <span className="underline underline-offset-2">{key}</span>}
            {post}
          </button>
        ))}
      </nav>
      <Toolbar />
      <main className="flex min-h-0 flex-1 pt-0.5">
        <aside className="w-[290px] shrink-0">
          <PanelTitle title="Pipelines" />
          <PipelineTree />
          <div className="h-2" />
          <PanelTitle title="Properties" />
          <Properties />
        </aside>
        <div className="ml-1.5 flex min-w-0 flex-1 flex-col pt-[3px] pb-[23px]">
          <div className="flex pl-[5px]">
            <Histogram />
            <div className="flex w-[42px] flex-col items-center gap-[10px] pt-[30px] pr-1">
              <button type="button" aria-label="Reset range to data"><ResetRangeIcon /></button>
              <button type="button" aria-label="Custom range"><CustomRangeIcon /></button>
              <button type="button" aria-label="Invert color map"><InvertIcon /></button>
              <button type="button" aria-label="Color presets"><PresetIcon /></button>
            </div>
          </div>
          <div className="h-4" />
          <RenderPanel />
        </div>
      </main>
    </div>
  );
}
